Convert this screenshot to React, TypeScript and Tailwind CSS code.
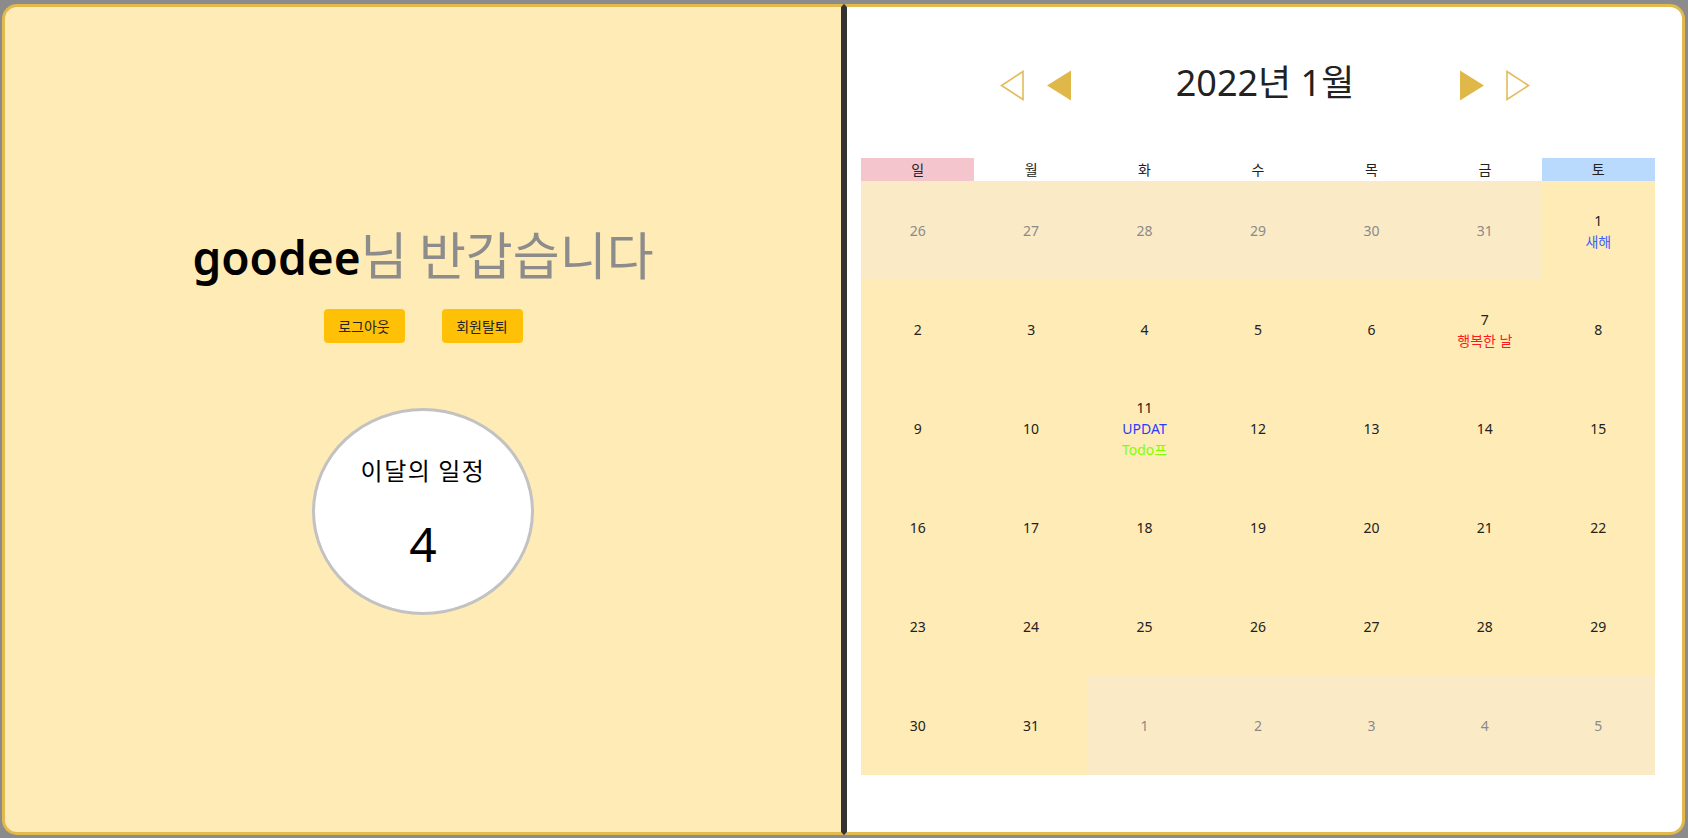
import React from "react";

const FONT = { fontFamily: '"Noto Sans", "Noto Sans CJK KR", sans-serif' };
const KR = { fontFamily: '"Noto Sans CJK KR", sans-serif' };

type Cell = { d: number; other?: boolean; events?: { t: string; c: string }[] };

const rows: Cell[][] = [
  [
    { d: 26, other: true },
    { d: 27, other: true },
    { d: 28, other: true },
    { d: 29, other: true },
    { d: 30, other: true },
    { d: 31, other: true },
    { d: 1, events: [{ t: "새해", c: "text-[#3f5fff]" }] },
  ],
  [
    { d: 2 },
    { d: 3 },
    { d: 4 },
    { d: 5 },
    { d: 6 },
    { d: 7, events: [{ t: "행복한 날", c: "text-[#ff1a1a]" }] },
    { d: 8 },
  ],
  [
    { d: 9 },
    { d: 10 },
    {
      d: 11,
      events: [
        { t: "UPDAT", c: "text-[#2b3cff]" },
        { t: "Todo프", c: "text-[#80ff00]" },
      ],
    },
    { d: 12 },
    { d: 13 },
    { d: 14 },
    { d: 15 },
  ],
  [16, 17, 18, 19, 20, 21, 22].map((d) => ({ d })),
  [23, 24, 25, 26, 27, 28, 29].map((d) => ({ d })),
  [
    { d: 30 },
    { d: 31 },
    { d: 1, other: true },
    { d: 2, other: true },
    { d: 3, other: true },
    { d: 4, other: true },
    { d: 5, other: true },
  ],
];

const days = ["일", "월", "화", "수", "목", "금", "토"];

function TriLeftOutline() {
  return (
    <svg width="24" height="31" viewBox="0 0 24 31">
      <polygon points="23,1.5 1.5,15.5 23,29.5" fill="none" stroke="#e2bc5c" strokeWidth="1.6" />
    </svg>
  );
}
function TriLeftFilled() {
  return (
    <svg width="24" height="31" viewBox="0 0 24 31">
      <polygon points="24,0.5 0,15.5 24,30.5" fill="#e0b84a" />
    </svg>
  );
}
function TriRightFilled() {
  return (
    <svg width="24" height="31" viewBox="0 0 24 31">
      <polygon points="0,0.5 24,15.5 0,30.5" fill="#e0b84a" />
    </svg>
  );
}
function TriRightOutline() {
  return (
    <svg width="24" height="31" viewBox="0 0 24 31">
      <polygon points="1,1.5 22.5,15.5 1,29.5" fill="none" stroke="#e2bc5c" strokeWidth="1.6" />
    </svg>
  );
}

export default function App() {
  return (
    <div className="w-[1688px] h-[838px] bg-[#8b8b8b] pt-[4px] pl-[2px] pr-[3px] pb-[3px] flex overflow-hidden" style={FONT}>
      {/* Left panel */}
      <div className="w-[842px] h-full bg-[#ffebb5] border-[3px] border-[#e2b94d] border-r-[#333333] rounded-l-[15px] flex flex-col items-center justify-center">
        <div className="h-[58px] leading-[58px] whitespace-nowrap flex items-baseline">
          <span className="text-[46px] font-semibold text-black">goodee</span>
          <span className="text-[51px] text-[#8c8c8c]" style={KR}>님 반갑습니다</span>
        </div>
        <div className="mt-[27px] flex gap-[37px]">
          <button className="w-[81px] h-[34px] bg-[#ffc107] rounded-[4px] text-[14px] text-[#222]" style={KR}>로그아웃</button>
          <button className="w-[81px] h-[34px] bg-[#ffc107] rounded-[4px] text-[14px] text-[#222]" style={KR}>회원탈퇴</button>
        </div>
        <div className="mt-[65px] w-[222px] h-[207px] rounded-[50%] border-[3px] border-[#c2c2c2] bg-white flex flex-col items-center pt-[44px]">
          <div className="text-[24px] leading-[30px] tracking-[1.5px] text-black" style={KR}>이달의 일정</div>
          <div className="mt-[31px] text-[48px] leading-[56px] font-normal text-black">4</div>
        </div>
      </div>

      {/* Right panel */}
      <div className="flex-1 h-full bg-white border-[3px] border-[#e2b94d] border-l-[#333333] rounded-r-[15px] flex flex-col">
        <div className="mt-[50px] h-[56px] flex items-center justify-center">
          <TriLeftOutline />
          <div className="ml-[23px]">
            <TriLeftFilled />
          </div>
          <div className="w-[389px] text-center text-[36px] leading-[48px] font-normal text-[#222] pb-[4px]" style={FONT}>
            2022년 1월
          </div>
          <TriRightFilled />
          <div className="ml-[22px]">
            <TriRightOutline />
          </div>
        </div>

        <div className="mt-[45px] ml-[14px] w-[794px]">
          <div className="grid grid-cols-7 h-[23px]">
            {days.map((d, i) => (
              <div
                key={d}
                className={`flex items-center justify-center text-[14px] text-[#222] ${
                  i === 0 ? "bg-[#f5c5ce]" : i === 6 ? "bg-[#b9d9fd]" : "bg-white"
                }`}
                style={KR}
              >
                {d}
              </div>
            ))}
          </div>
          {rows.map((row, ri) => (
            <div key={ri} className="grid grid-cols-7 h-[99px]">
              {row.map((c, ci) => (
                <div
                  key={ci}
                  className={`flex flex-col items-center justify-center text-[14px] leading-[21px] ${
                    c.other ? "bg-[#faebc6] text-[#8a8a8a]" : "bg-[#ffebb5] text-[#222]"
                  }`}
                >
                  <div>{c.d}</div>
                  {c.events?.map((e, ei) => (
                    <div key={ei} className={e.c} style={FONT}>
                      {e.t}
                    </div>
                  ))}
                </div>
              ))}
            </div>
          ))}
        </div>
      </div>
    </div>
  );
}
